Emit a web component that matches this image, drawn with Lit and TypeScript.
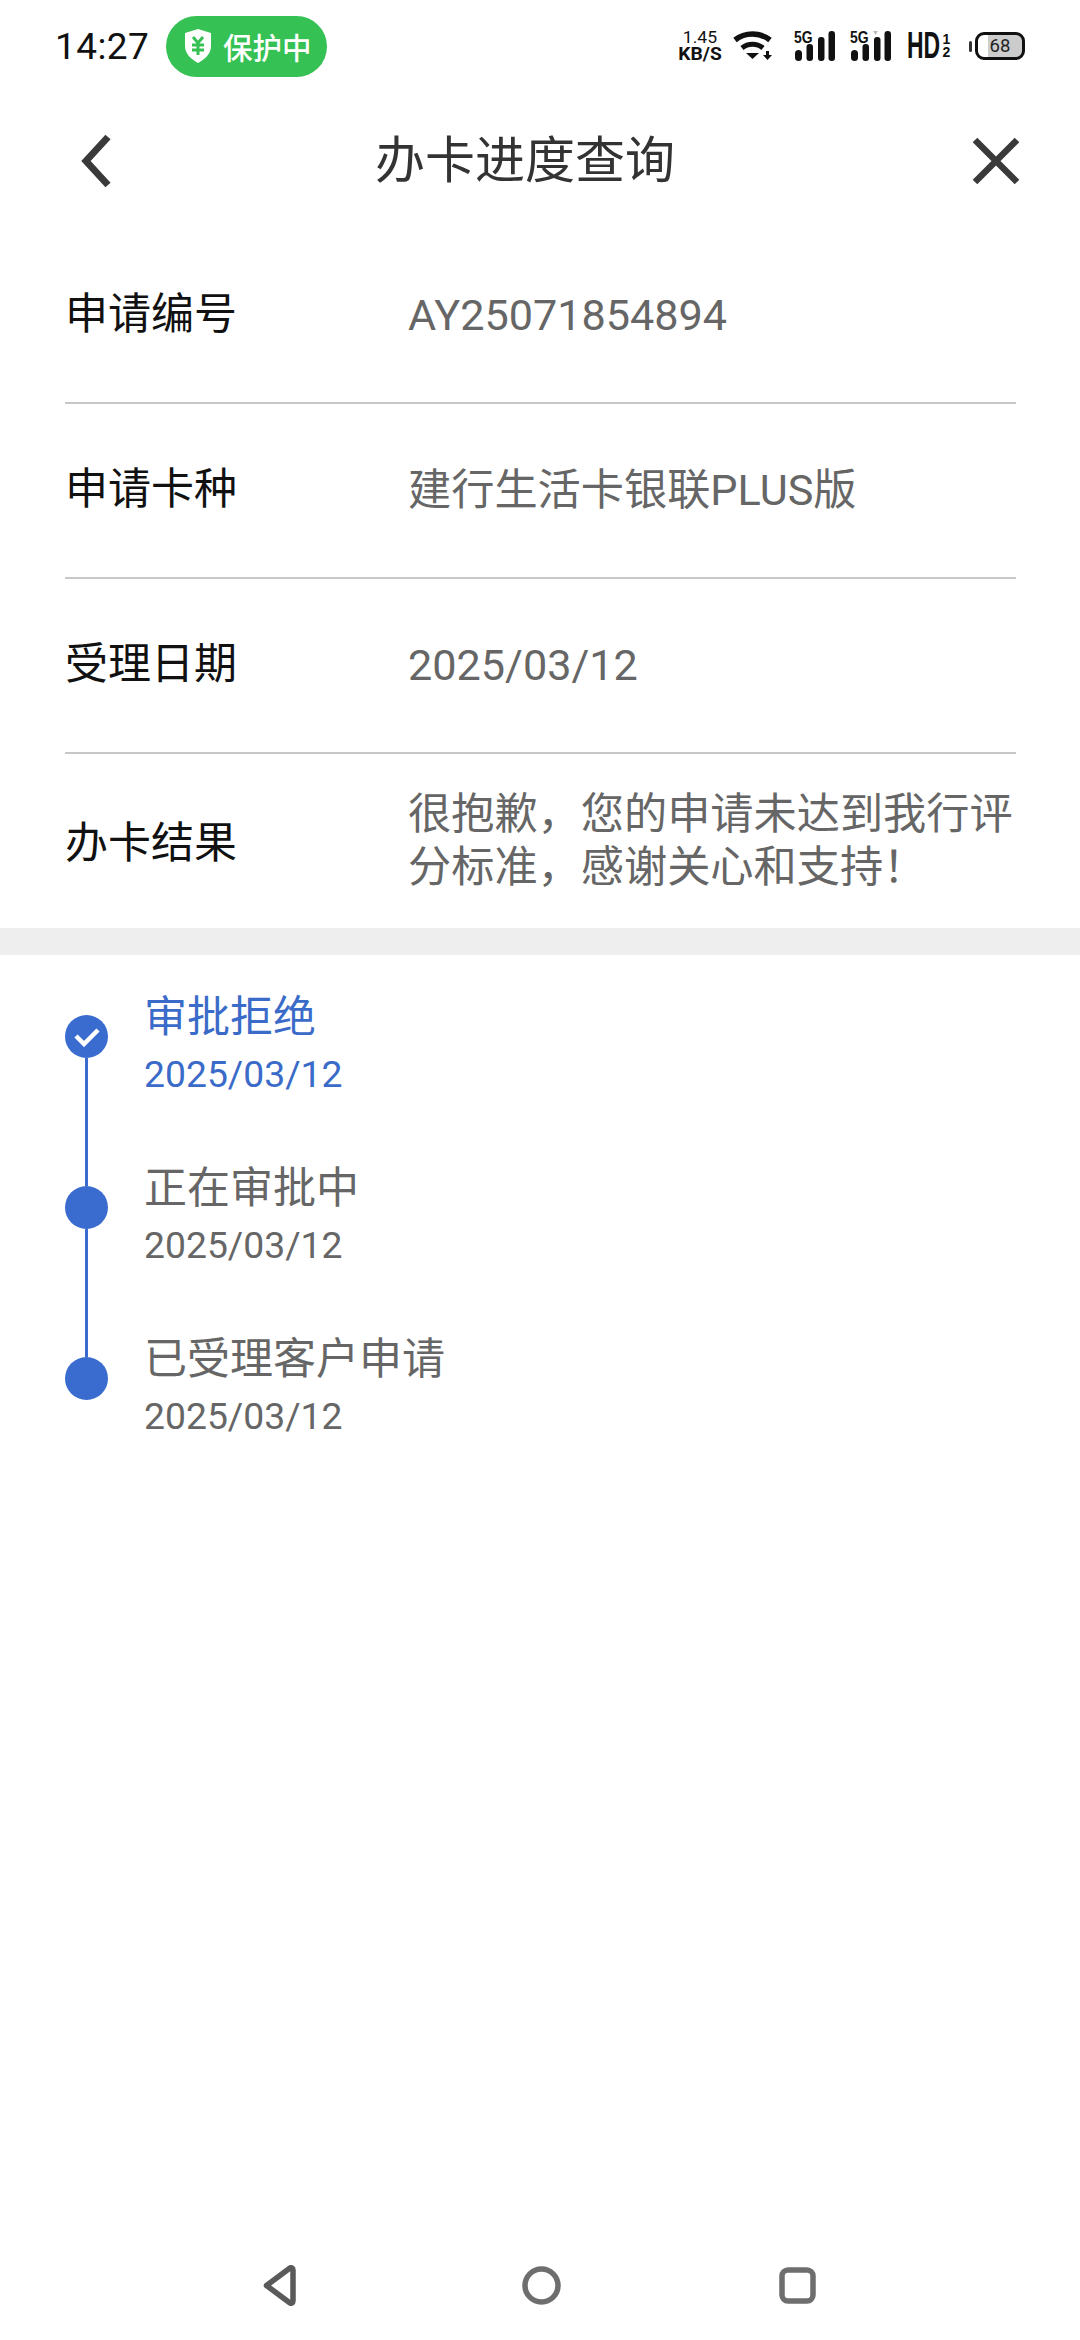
import { LitElement, html, css, svg } from "lit";
import { customElement } from "lit/decorators.js";

const rows = [
  { label: "申请编号", value: ["AY25071854894"] },
  { label: "申请卡种", value: ["建行生活卡银联PLUS版"] },
  { label: "受理日期", value: ["2025/03/12"] },
  { label: "办卡结果", value: ["很抱歉，您的申请未达到我行评", "分标准，感谢关心和支持！"] },
];
const steps = [
  { title: "审批拒绝", date: "2025/03/12", active: true },
  { title: "正在审批中", date: "2025/03/12", active: false },
  { title: "已受理客户申请", date: "2025/03/12", active: false },
];

const signal = (dim: boolean) => html`<span class="sig"><span class="fiveg">5G</span>
  <svg width="40" height="30" viewBox="0 0 40 30">
    <rect x="0" y="19" width="7" height="11" rx="3.5" fill="#111"/>
    <rect x="11.500" y="13" width="6.500" height="17" rx="3" fill="#111"/>
    <rect x="23" y="6" width="6.500" height="24" rx="3" fill="#111"/>
    <rect x="33.500" y="0" width="6.500" height="30" rx="3" fill="#111"/>
    ${dim ? svg`<path d="M22 0h5l-2.500 4z" fill="#bbb"/>` : ""}
  </svg></span>`;

@customElement("app-root")
export class AppRoot extends LitElement {
  static styles = css`
    :host { display: block; width: 1080px; height: 2340px; background: #fff; font-family: Roboto, "Noto Sans CJK SC", sans-serif; overflow: hidden; }
    .page { display: flex; flex-direction: column; height: 100%; }
    .status { height: 92px; display: flex; align-items: center; padding: 0 55px 0 55px; flex: none; }
    .time { font-size: 37px; color: #111; letter-spacing: 0.4px; width: 111px; flex: none; }
    .pill { width: 161px; height: 61px; border-radius: 31px; background: #35c153; color: #fff; display: flex; align-items: center; gap: 10px; padding-left: 17px; box-sizing: border-box; font-size: 29.500px; font-weight: 500; }
    .right { margin-left: auto; display: flex; align-items: center; height: 40px; }
    .speed { font-size: 16px; line-height: 16px; text-align: center; color: #111; width: 42px; margin-right: 12px; white-space: nowrap; display: flex; flex-direction: column; align-items: center; transform: scaleX(1.1); }
    .speed b { font-size: 17.500px; font-weight: 700; }
    .wifi { margin-right: 23px; display: block; }
    .sig { position: relative; display: block; width: 40px; height: 30px; margin-right: 16px; }
    .sig svg { display: block; }
    .fiveg { position: absolute; left: -1px; top: -2px; font: 700 17px/18px "Liberation Sans", sans-serif; color: #111; transform: scaleX(.82); transform-origin: left top; }
    .hd { width: 44px; margin-right: 24px; display: flex; align-items: center; color: #111; }
    .hd-main { font: 700 37px/30px "Liberation Sans", sans-serif; display: block; width: 32px; transform: scaleX(.62); transform-origin: left center; }
    .frac { font: 700 14px/13px "Liberation Sans", sans-serif; display: flex; flex-direction: column; align-items: center; width: 9px; margin-left: 3px; }
    .batt { position: relative; width: 50px; height: 28px; border: 3px solid #111; border-radius: 9px; box-sizing: border-box; font-size: 18.500px; line-height: 22px; color: #222; text-align: center; background: linear-gradient(90deg, #fff 22%, #ccc 22%); }
    .batt::before { content: ""; position: absolute; left: -9px; top: 6px; width: 3px; height: 11px; background: #333; border-radius: 2px; }
    .header { height: 137px; flex: none; display: flex; align-items: center; justify-content: space-between; padding: 0 60px 0 79px; box-sizing: border-box; }
    .header svg { display: block; }
    .title { font-size: 50px; color: #333; line-height: 60px; margin-left: -37px; }
    .rows { padding: 0 64px 0 65px; flex: none; }
    .row { height: 175px; display: flex; align-items: center; border-bottom: 2px solid #c8c8c8; box-sizing: border-box; }
    .row:last-child { border-bottom: 0; height: 174px; }
    .label { width: 343px; flex: none; font-size: 43px; color: #111; line-height: 56px; padding-bottom: 3px; }
    .row:last-child .label { padding-bottom: 0; padding-top: 3px; }
    .value { font-size: 43.200px; color: #666; line-height: 53px; white-space: nowrap; padding-bottom: 1px; }
    .row:last-child .value { padding-bottom: 0; }
    .band { height: 27px; background: #eeeeee; flex: none; }
    .steps { padding: 0 0 0 65px; flex: none; }
    .step { display: flex; height: 171px; }
    .track { width: 43px; height: 171px; margin: 60px 36px 0 0; flex: none; display: flex; flex-direction: column; align-items: center; }
    .dot { width: 43px; height: 43px; border-radius: 50%; background: #3a6ccf; flex: none; display: flex; align-items: center; justify-content: center; }
    .line { width: 3px; flex: 1; background: #3a6ccf; }
    .text { padding-top: 34px; color: #666; }
    .step.active .text { color: #3b6bc9; }
    .st { font-size: 43px; line-height: 56px; }
    .date { font-size: 37.300px; line-height: 44px; margin-top: 7px; }
    .nav { margin-top: auto; height: 90px; padding: 0 2px 10px 0; display: flex; flex: none; align-items: center; justify-content: center; }
    .nav svg { display: block; }
    .n1 { margin-right: 226px; } .n2 { margin-right: 218px; }
  `;

  render() {
    return html`<div class="page">
      <div class="status">
        <span class="time">14:27</span>
        <span class="pill">
          <svg width="30" height="36" viewBox="0 0 30 36"><path d="M15 1 28 5v13c0 8-6 13-13 17C8 31 2 26 2 18V5z" fill="#fff"/><path d="M10 9l5 6 5-6M9 17h12M9 22h12M15 15v12" stroke="#35c153" stroke-width="3" fill="none"/></svg>
          保护中
        </span>
        <div class="right">
          <div class="speed"><span>1.45</span><b>KB/S</b></div>
          <svg class="wifi" width="39" height="30" viewBox="0 0 39 30">
            <path d="M2 9C12 1 27 1 37 9" stroke="#111" stroke-width="5.500" fill="none"/>
            <path d="M9 17c6-5 15-5 21 0" stroke="#111" stroke-width="5" fill="none"/>
            <path d="M13 22h13l-6.500 6z" fill="#111"/>
            <path d="M33 20h3v4h3l-4.500 5-4.500-5h3z" fill="#111"/>
          </svg>
          ${signal(false)}${signal(true)}
          <div class="hd"><span class="hd-main">HD</span><span class="frac"><span>1</span><span>2</span></span></div>
          <div class="batt">68</div>
        </div>
      </div>
      <div class="header">
        <svg width="36" height="54" viewBox="0 0 36 54"><path d="M29 3 7 27l22 24" stroke="#3a3a3a" stroke-width="7" fill="none"/></svg>
        <span class="title">办卡进度查询</span>
        <svg width="48" height="48" viewBox="0 0 48 48"><path d="M3 3l42 42M45 3 3 45" stroke="#3a3a3a" stroke-width="6.500" fill="none"/></svg>
      </div>
      <div class="rows">
        ${rows.map(r => html`<div class="row"><span class="label">${r.label}</span><div class="value">${r.value.map(v => html`<div>${v}</div>`)}</div></div>`)}
      </div>
      <div class="band"></div>
      <div class="steps">
        ${steps.map((s, i) => html`<div class="step ${s.active ? "active" : ""}">
          <div class="track">
            <div class="dot">${s.active ? html`<svg width="26" height="20" viewBox="0 0 26 20"><path d="M2 9l8 8L24 3" stroke="#fff" stroke-width="4.500" fill="none"/></svg>` : ""}</div>
            ${i < steps.length - 1 ? html`<div class="line"></div>` : ""}
          </div>
          <div class="text"><div class="st">${s.title}</div><div class="date">${s.date}</div></div>
        </div>`)}
      </div>
      <div class="nav">
        <svg class="n1" width="33" height="41" viewBox="0 0 33 41"><path d="M3.500 20.500 27 3c1-.7 3 0 3 2v31c0 2-2 2.700-3 2z" stroke="#5a5a5a" stroke-width="5.500" stroke-linejoin="round" fill="none"/></svg>
        <svg class="n2" width="39" height="39" viewBox="0 0 39 39"><circle cx="19.500" cy="19.500" r="16.500" stroke="#6e6e6e" stroke-width="5.500" fill="none"/></svg>
        <svg width="37" height="37" viewBox="0 0 37 37"><rect x="3" y="3" width="31" height="31" rx="6" stroke="#6e6e6e" stroke-width="5.500" fill="none"/></svg>
      </div>
    </div>`;
  }
}
